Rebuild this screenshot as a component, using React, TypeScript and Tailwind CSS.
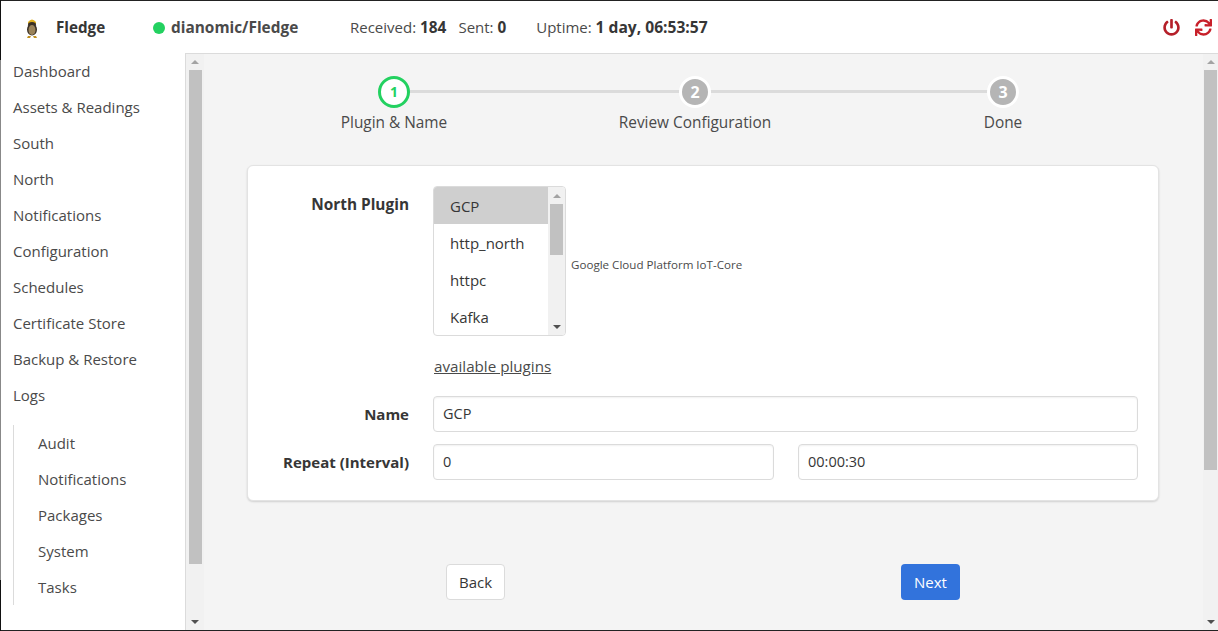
import React from "react";
import { FaPowerOff, FaSync } from "react-icons/fa";

const font = "font-['Open_Sans','Noto_Sans',sans-serif]";

function Owl() {
  return (
    <svg width="14" height="20" viewBox="0 0 14 20">
      <path d="M3 4 Q7 -1 11 4 L11 6 L3 6Z" fill="#e0b020" />
      <ellipse cx="7" cy="6.5" rx="4" ry="2.5" fill="#3a3026" />
      <ellipse cx="7" cy="11.5" rx="5" ry="6" fill="#3a3026" />
      <ellipse cx="7" cy="12" rx="3.5" ry="5" fill="#9a835a" />
      <path d="M3 18 L6 18 L5 20 L2 20Z M8 18 L11 18 L12 20 L9 20Z" fill="#c09020" />
    </svg>
  );
}

function ScrollBar({ thumbH, w, inset, top }: { thumbH: string; w: string; inset: string; top: string }) {
  return (
    <div className={`${w} shrink-0 bg-[#f1f1f1] flex flex-col items-center`}>
      <div className={`${top} w-full flex items-center justify-center`}>
        <div className="w-0 h-0 border-x-[4px] border-x-transparent border-b-[4px] border-b-[#a3a3a3]" />
      </div>
      <div className={`${thumbH} ${inset} bg-[#c1c1c1]`} />
      <div className="flex-1" />
      <div className="h-4 flex items-center justify-center">
        <div className="w-0 h-0 border-x-[4px] border-x-transparent border-t-[4px] border-t-[#505050]" />
      </div>
    </div>
  );
}

const nav = ["Dashboard", "Assets & Readings", "South", "North", "Notifications", "Configuration", "Schedules", "Certificate Store", "Backup & Restore", "Logs"];
const sub = ["Audit", "Notifications", "Packages", "System", "Tasks"];

function Step({ n, label, active, width, line }: { n: string; label: string; active?: boolean; width: string; line?: string }) {
  return (
    <div className={`${width} flex flex-col items-center relative`}>
      {line && <div className={`${line} absolute top-[14px] h-[3px] bg-[#dbdbdb]`} />}
      <div
        className={
          active
            ? "relative z-10 w-8 h-8 rounded-full border-[3px] border-[#23d160] bg-white text-[#23d160] text-sm font-bold flex items-center justify-center"
            : "relative z-10 w-8 h-8 rounded-full border-[3px] border-white bg-[#b5b5b5] text-white text-base font-bold flex items-center justify-center"
        }
      >
        {n}
      </div>
      <div className="mt-[3px] text-[15.4px] leading-[24px] text-[#4a4a4a] whitespace-nowrap">{label}</div>
    </div>
  );
}

export default function App() {
  const input = "h-9 rounded border border-[#dbdbdb] bg-white px-[9px] text-[#363636] text-[14.5px] flex items-center shadow-[inset_0_1px_2px_rgba(10,10,10,0.06)]";
  return (
    <div className="w-[1218px] h-[631px] overflow-hidden pl-px bg-[linear-gradient(#111_60px,#888_60px,#888_580px,#111_580px)]">
      <div className={`${font} h-full bg-white border-t border-b border-[#222] text-[#4a4a4a] flex flex-col`}>
        <header className="h-[52px] pt-px shrink-0 flex items-center bg-white">
          <div className="w-[53px] pl-[24px] flex items-center"><Owl /></div>
          <span className="ml-[2px] w-[97px] text-[15.2px] font-bold text-[#363636]">Fledge</span>
          <span className="w-3 h-3 rounded-full bg-[#23d160]" />
          <span className="ml-[6px] w-[179px] text-[15.4px] font-bold text-[#4a4a4a]">dianomic/Fledge</span>
          <span className="text-[15px] text-[#4a4a4a]">Received: <b className="text-[15.4px] text-[#363636]">184</b></span>
          <span className="ml-[12px] text-[15px] text-[#4a4a4a]">Sent: <b className="text-[15.3px] text-[#363636]">0</b></span>
          <span className="ml-[30px] text-[15px] text-[#4a4a4a]">Uptime: <b className="text-[15.6px] text-[#363636]">1 day, 06:53:57</b></span>
          <div className="flex-1" />
          <FaPowerOff size={17} className="text-[#b5202a]" />
          <FaSync size={17} className="ml-[15px] mr-[6px] text-[#c8202a]" />
        </header>
        <div className="flex-1 min-h-0 flex">
          <aside className="w-[185px] shrink-0 pl-[12px] bg-white border-r border-[#dbdbdb] text-[15px] text-[#4a4a4a]">
            {nav.map((t) => (
              <div key={t} className="h-9 flex items-center">{t}</div>
            ))}
            <div className="border-l border-[#dbdbdb] pl-6 mt-3">
              {sub.map((t) => (
                <div key={t} className="h-9 flex items-center">{t}</div>
              ))}
            </div>
          </aside>
          <ScrollBar thumbH="h-[494px]" w="w-[18px]" inset="w-[13px] ml-px" top="h-[17px] border-t border-[#dbdbdb]" />
          <main className="flex-1 min-w-0 bg-[#f4f4f4] border-t border-[#dbdbdb] flex flex-col">
            <div className="pt-[22px] pl-[40px] flex">
              <Step n="1" label="Plugin & Name" active width="w-[300px]" line="left-[150px] w-[301px]" />
              <Step n="2" label="Review Configuration" width="w-[302px]" line="left-[151px] w-[308px]" />
              <Step n="3" label="Done" width="w-[314px]" />
            </div>
            <div className="ml-[43px] mr-[44px] mt-[30px] h-[336px] rounded-md bg-white border border-[#e3e3e3] shadow-[0_1px_2px_rgba(10,10,10,0.15)] pt-5 pr-5 text-[15px]">
              <div className="flex">
                <div className="w-[161px] text-right text-[15.4px] font-bold text-[#363636] leading-[36px] mt-[1px]">North Plugin</div>
                <div className="ml-6 w-[133px] h-[150px] rounded border border-[#dbdbdb] bg-white overflow-hidden flex">
                  <div className="w-[115px] text-[15px] text-[#363636]">
                    {["GCP", "http_north", "httpc", "Kafka"].map((p, i) => (
                      <div key={p} className={`h-[37px] pl-4 pt-[2px] flex items-center ${i === 0 ? "bg-[#cfcfcf]" : ""}`}>{p}</div>
                    ))}
                  </div>
                  <ScrollBar thumbH="h-[51px]" w="w-[17px]" inset="w-[13px]" top="h-[17px]" />
                </div>
                <div className="ml-[5px] mt-[8px] self-center text-[11.6px] text-[#4a4a4a] whitespace-nowrap">Google Cloud Platform IoT-Core</div>
              </div>
              <div className="ml-[186px] mt-[20px] h-5 flex items-center underline text-[15.2px] text-[#4a4a4a]">available plugins</div>
              <div className="mt-[20px] flex gap-6 items-center">
                <div className="w-[161px] text-right font-bold text-[#363636]">Name</div>
                <div className={`${input} flex-1`}>GCP</div>
              </div>
              <div className="mt-3 flex gap-6 items-center">
                <div className="w-[161px] text-right font-bold text-[#363636]">Repeat (Interval)</div>
                <div className={`${input} w-[341px]`}>0</div>
                <div className={`${input} flex-1`}>00:00:30</div>
              </div>
            </div>
            <div className="mt-[63px] flex">
              <button className="ml-[242px] w-[59px] h-9 rounded border border-[#dbdbdb] bg-white text-[15px] text-[#363636]">Back</button>
              <button className="ml-[396px] w-[59px] h-9 rounded bg-[#3273dc] text-white text-[15px]">Next</button>
            </div>
          </main>
          <ScrollBar thumbH="h-[400px]" w="w-[15px]" inset="w-[13px]" top="h-[17px] border-t border-[#dbdbdb]" />
        </div>
      </div>
    </div>
  );
}
